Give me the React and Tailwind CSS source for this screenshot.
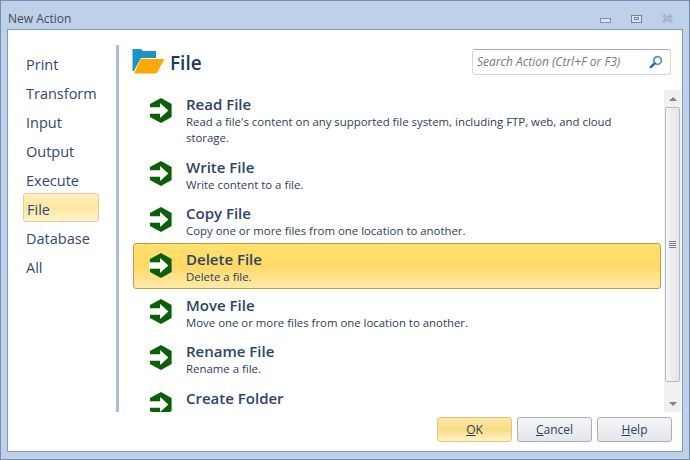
import React from "react";

const font = { fontFamily: '"Open Sans","Noto Sans",sans-serif' };

function ArrowIcon() {
  return (
    <svg width="24" height="27" viewBox="0 0 26 28" className="shrink-0">
      <path d="M0 10.5 H12 V6 L21 14 L12 22 V17.5 H0 Z" fill="#ffffff" />
      <path d="M13 0.5 L24.5 7 V21 L13 27.5 L1 21 V17.5 H12 V22 L21 14 L12 6 V10.5 H1 V7 Z" fill="#0b5f0b" />
    </svg>
  );
}

function FolderIcon() {
  return (
    <svg width="33" height="25" viewBox="0 0 33 25" className="shrink-0 -ml-[1px]">
      <path d="M0.5 0 H9 L11 2 H24 V9 H9 L2 22 H0.5 Z" fill="#1a94c4" />
      <path d="M9 10 H32.5 L24.5 24.5 H2 Z" fill="#ffa800" />
    </svg>
  );
}

function SearchIcon() {
  return (
    <svg width="14" height="14" viewBox="0 0 14 14">
      <circle cx="8.5" cy="5.5" r="3.8" fill="none" stroke="#5b8fc9" strokeWidth="1.8" />
      <path d="M5.6 8.4 L1.8 12.2" stroke="#2f62a8" strokeWidth="2.4" strokeLinecap="round" />
    </svg>
  );
}

const categories = ["Print", "Transform", "Input", "Output", "Execute", "File", "Database", "All"];

const actions = [
  { t: "Read File", d: "Read a file's content on any supported file system, including FTP, web, and cloud storage.", h: "h-[63px]" },
  { t: "Write File", d: "Write content to a file.", h: "h-[46px]" },
  { t: "Copy File", d: "Copy one or more files from one location to another.", h: "h-[46px]" },
  { t: "Delete File", d: "Delete a file.", h: "h-[46px]", sel: true },
  { t: "Move File", d: "Move one or more files from one location to another.", h: "h-[46px]" },
  { t: "Rename File", d: "Rename a file.", h: "h-[47px]" },
  { t: "Create Folder", d: "Create a folder.", h: "h-[47px]" },
];

function Btn({ k, rest, primary }) {
  return (
    <div
      className={
        "w-[75px] h-[25px] rounded-[3px] border flex items-center justify-center text-[12px] text-[#2b3f5c] " +
        (primary
          ? "border-[#e3c678] bg-gradient-to-b from-[#fbeaa8] via-[#f8dc84] to-[#fdf3c8]"
          : "border-[#a9b0b8] bg-gradient-to-b from-[#f5f6f7] to-[#e3e6ea]")
      }
    >
      <span><span className="underline">{k}</span>{rest}</span>
    </div>
  );
}

export default function App() {
  return (
    <div style={font} className="w-[690px] h-[460px] flex flex-col bg-[#bfd1e8] border border-[#7390b3] overflow-hidden">
      <div className="h-[28px] shrink-0 flex items-center pl-[7px] pr-[16px] pt-[7px] text-[12px] text-[#3f4a5c]">
        <span className="flex-1">New Action</span>
        <div className="flex items-center gap-[20px]">
          <div className="w-[11px] h-[5px] mt-[3px] border border-[#7f93ad] bg-[#dbe5f1]" />
          <div className="w-[11px] h-[8px] border border-[#6f86a3] bg-[#dbe5f1] flex items-center justify-center">
            <div className="w-[5px] h-[3px] border border-[#6f86a3]" />
          </div>
          <svg width="11" height="9" viewBox="0 0 11 9">
            <path d="M1 1 L10 8 M10 1 L1 8" stroke="#8ba0ba" strokeWidth="2.6" />
            <path d="M1 1 L10 8 M10 1 L1 8" stroke="#dbe5f1" strokeWidth="0.8" />
          </svg>
        </div>
      </div>
      <div className="ml-[6px] mr-[6px] h-[423px] bg-white border border-[#7f9bbd] flex flex-col">
        <div className="flex flex-1 min-h-0">
          {/* sidebar */}
          <div className="w-[108px] shrink-0 flex flex-col pt-[20px] pl-[15px] pr-[17px] pb-0">
            {categories.map((c) => (
              <div
                key={c}
                className={
                  "h-[29px] shrink-0 flex items-center pl-[3px] text-[14.5px] text-[#2d4a70] rounded-[3px] " +
                  (c === "File"
                    ? "-mt-[2px] mb-[2px] pt-[4px] border border-[#e3cd95] bg-gradient-to-b from-[#fff0c2] via-[#ffe69f] to-[#fdf3cf]"
                    : "")
                }
              >
                {c}
              </div>
            ))}
          </div>
          <div className="w-[3px] shrink-0 mt-[15px] h-[367px] bg-[#a9bedb]" />
          {/* main */}
          <div className="flex-1 min-w-0 flex flex-col pl-[14px] pr-[1px]">
            <div className="h-[58px] shrink-0 flex items-start pt-[19px]">
              <FolderIcon />
              <span className="ml-[5px] mt-[1px] text-[19px] leading-[26px] font-semibold text-[#20385c]">File</span>
              <div className="ml-auto mr-[10px] w-[199px] h-[26px] rounded-[3px] border border-[#d3d8df] border-t-[#a6acb5] flex items-center pl-[4px] pr-[7px]">
                <span className="flex-1 italic text-[12px] text-[#77797d]">Search Action (Ctrl+F or F3)</span>
                <SearchIcon />
              </div>
            </div>
            <div className="h-[325px] flex overflow-hidden">
              <div className="w-[528px] shrink-0 flex flex-col">
                {actions.map((a) => (
                  <div
                    key={a.t}
                    className={
                      a.h + " shrink-0 flex pl-[15px] pr-[20px] rounded-[3px] pt-[5px] border " +
                      (a.sel
                        ? "border-[#c9983f] bg-gradient-to-b from-[#ffe16f] via-[#ffd966] to-[#fbeaa8]"
                        : "border-transparent")
                    }
                  >
                    <div className="pt-[3px]">
                      <ArrowIcon />
                    </div>
                    <div className="ml-[13px] flex flex-col min-w-0">
                      <div className="text-[15px] leading-[20px] font-semibold text-[#2c4468]">{a.t}</div>
                      <div className="text-[11.4px] leading-[16px] text-[#2d4058]">{a.d}</div>
                    </div>
                  </div>
                ))}
              </div>
              <div className="ml-[3px] w-[17px] mt-[2px] h-[322px] shrink-0 bg-[#f0f0f0] flex flex-col items-center">
                <div className="h-[17px] shrink-0 flex items-center">
                  <div className="w-0 h-0 border-x-[4px] border-x-transparent border-b-[4px] border-b-[#7a8290]" />
                </div>
                <div className="w-[15px] h-[275px] shrink-0 rounded-[2px] border border-[#b6bcc4] bg-gradient-to-r from-[#f4f5f6] to-[#e2e4e7] flex flex-col items-center justify-center gap-[1px]">
                  <div className="w-[7px] h-[1px] bg-[#7a8299]" />
                  <div className="w-[7px] h-[1px] bg-[#7a8299]" />
                  <div className="w-[7px] h-[1px] bg-[#7a8299]" />
                  <div className="w-[7px] h-[1px] bg-[#7a8299]" />
                </div>
                <div className="flex-1 flex items-end pb-[6px]">
                  <div className="w-0 h-0 border-x-[4px] border-x-transparent border-t-[4px] border-t-[#7a8290]" />
                </div>
              </div>
            </div>
          </div>
        </div>
        <div className="h-[39px] shrink-0 flex items-start justify-end gap-[5px] pr-[10px] pt-[5px]">
          <Btn k="O" rest="K" primary />
          <Btn k="C" rest="ancel" />
          <Btn k="H" rest="elp" />
        </div>
      </div>
    </div>
  );
}
